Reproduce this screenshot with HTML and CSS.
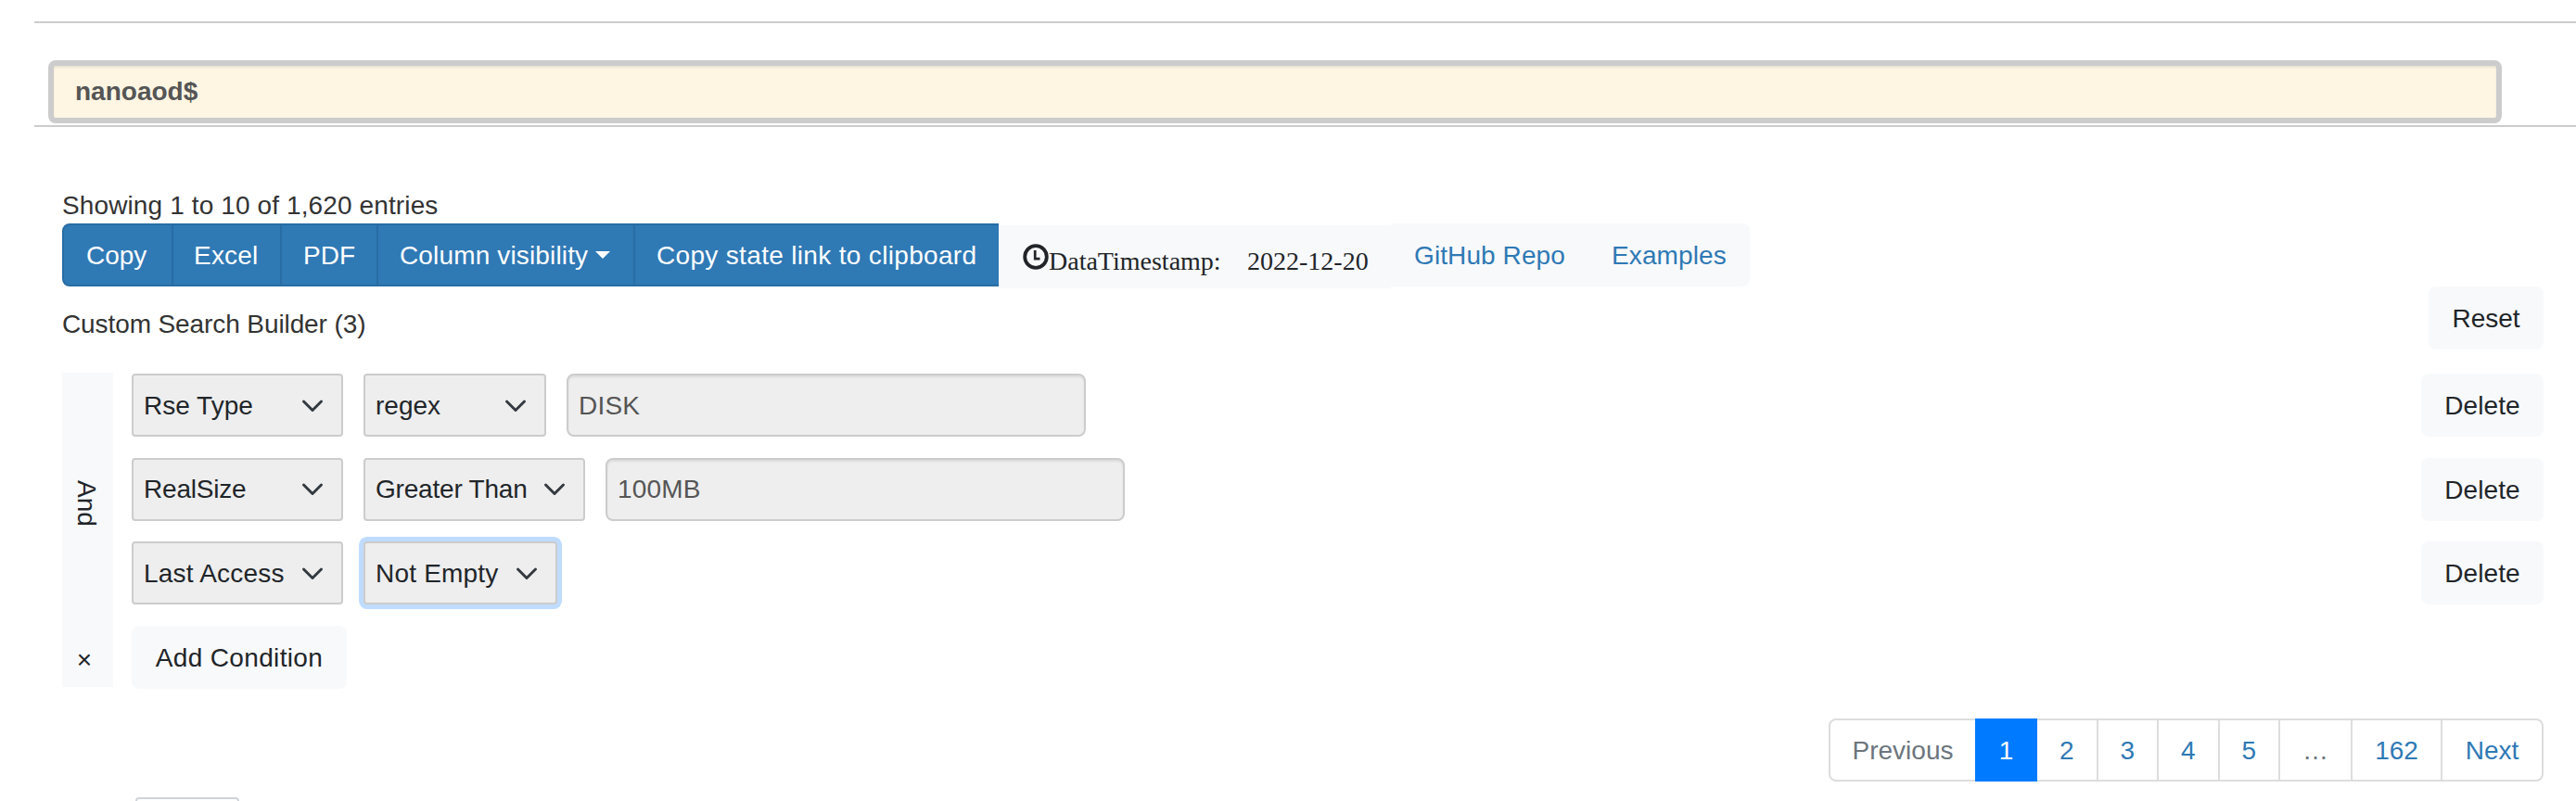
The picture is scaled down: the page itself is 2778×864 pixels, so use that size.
FILE: index.html
```html
<!DOCTYPE html>
<html lang="en">
<head>
<meta charset="utf-8">
<title>Datasets</title>
<link rel="stylesheet" href="styles.css">
</head>
<body>
<header class="query"><input class="query-input" value="nanoaod$" aria-label="Dataset"></header>
<main class="content">
  <div class="info">Showing 1 to 10 of 1,620 entries</div>
  <div class="toolbar">
    <button class="tool tool-copy">Copy</button>
    <button class="tool tool-excel">Excel</button>
    <button class="tool tool-pdf">PDF</button>
    <button class="tool tool-columns">Column visibility<span class="caret"></span></button>
    <button class="tool tool-link">Copy state link to clipboard</button>
    <div class="stamp">
      <svg class="clock" viewBox="0 0 28 28"><circle cx="14" cy="14" r="11.8"/><path d="M13.2 7v9.2h5.3"/></svg>
      <span class="stamp-label">DataTimestamp:</span><span class="stamp-date">2022-12-20</span>
    </div>
    <div class="links"><a class="repo">GitHub Repo</a><a class="examples">Examples</a></div>
  </div>
  <div class="builder-head"><div class="builder-title">Custom Search Builder (3)</div><button class="light reset">Reset</button></div>
  <div class="builder">
    <div class="logic"><span class="logic-and">And</span><span class="logic-clear">×</span></div>
    <div class="criteria">
      <div class="row">
        <div class="select field">Rse Type<svg class="chevron" viewBox="0 0 24 16"><path d="M2.5 3l9.5 9.5L21.500 3"/></svg></div>
        <div class="select cond-regex">regex<svg class="chevron" viewBox="0 0 24 16"><path d="M2.500 3l9.500 9.500L21.500 3"/></svg></div>
        <input class="value" value="DISK" aria-label="Value">
        <button class="light delete">Delete</button>
      </div>
      <div class="row">
        <div class="select field tight">RealSize<svg class="chevron" viewBox="0 0 24 16"><path d="M2.500 3l9.500 9.500L21.500 3"/></svg></div>
        <div class="select cond-greater tight">Greater Than<svg class="chevron" viewBox="0 0 24 16"><path d="M2.500 3l9.500 9.500L21.500 3"/></svg></div>
        <input class="value" value="100MB" aria-label="Value">
        <button class="light delete">Delete</button>
      </div>
      <div class="row">
        <div class="select field wide">Last Access<svg class="chevron" viewBox="0 0 24 16"><path d="M2.500 3l9.500 9.500L21.500 3"/></svg></div>
        <div class="select cond-empty focused wide">Not Empty<svg class="chevron" viewBox="0 0 24 16"><path d="M2.500 3l9.500 9.500L21.500 3"/></svg></div>
        <button class="light delete">Delete</button>
      </div>
      <div class="row"><button class="light add">Add Condition</button></div>
    </div>
  </div>
  <nav class="pages">
    <a class="page previous">Previous</a><a class="page active">1</a><a class="page">2</a><a class="page">3</a><a class="page">4</a><a class="page">5</a><a class="page dots">…</a><a class="page last">162</a><a class="page next">Next</a>
  </nav>
  <div class="length"></div>
</main>
</body>
</html>
```

FILE: styles.css
```css
* { box-sizing: border-box; }
html, body { height: 864px; overflow: hidden; }
body { margin: 0; background: #fff; color: #333; font: 28px/40px "Liberation Sans", Arial, sans-serif; }
button, input { font: inherit; margin: 0; }
svg { fill: none; flex: none; }
.query { margin: 23px 0 0 37px; height: 114px; border-top: 2px solid #ccc; border-bottom: 2px solid #ccc; padding: 40px 0 0 15px; }
.query-input { display: block; width: 2646px; height: 68px; border: 6px solid #ccc; border-radius: 8px; background: #fff5e3; color: #555; font-weight: 700; padding: 0 23px; box-shadow: inset 0 2px 2px rgba(0,0,0,.075); outline: 0; }
.content { padding: 65px 35px 0 67px; }
.info { height: 39px; letter-spacing: .12px; }
.toolbar { display: flex; height: 68px; align-items: flex-start; }
.tool { height: 68px; border: 2px solid #286da4; border-left-width: 0; background: #2f79b5; color: #fff; text-align: left; padding: 2px 0 0 26px; white-space: nowrap; }
.tool-copy { width: 120px; border-left-width: 2px; border-radius: 8px 0 0 8px; padding-left: 24px; }
.tool-excel { width: 117px; padding-left: 22px; letter-spacing: .2px; }
.tool-pdf { width: 104px; padding-left: 23px; }
.tool-columns { width: 277px; padding-left: 23px; letter-spacing: .15px; }
.tool-link { width: 392px; padding-left: 23px; border-right-width: 0; letter-spacing: .33px; }
.caret { display: inline-block; border: 8px solid transparent; border-top-color: #fff; border-bottom: 0; margin-left: 8px; vertical-align: 6px; }
.stamp { width: 423px; height: 68px; margin-top: 2px; background: #f8f9fb; color: #212529; display: flex; align-items: flex-start; padding: 19px 0 0 26px; font-family: "Liberation Serif", serif; }
.clock { width: 28px; height: 28px; stroke: #212529; stroke-width: 3.8; margin-top: 1px; }
.clock path { stroke-width: 2.7; }
.stamp-label { width: 214px; white-space: nowrap; }
.links { width: 387px; height: 68px; background: #f8f9fb; border-radius: 0 8px 8px 0; color: #2f79b5; display: flex; padding: 15px 0 0 25px; letter-spacing: .1px; }
.repo { width: 213px; }
.light { height: 68px; border: 0; border-radius: 8px; background: #f8f9fb; color: #212529; padding: 2px 0 0; white-space: nowrap; }
.builder-head { display: flex; justify-content: space-between; height: 93px; }
.builder-title { padding-top: 21px; letter-spacing: -.1px; }
.reset { width: 124px; }
.builder { display: flex; gap: 20px; height: 341px; }
.logic { width: 55px; height: 339px; background: #f8f9fb; color: #212529; display: flex; flex-direction: column; align-items: center; justify-content: space-between; padding: 116px 0 9px; }
.logic-and { writing-mode: vertical-rl; line-height: 43px; margin-right: 3px; }
.logic-clear { margin-right: 7px; font-size: 28px; }
.criteria { flex: 1; display: flex; flex-direction: column; gap: 22.7px; padding-top: 1px; }
.row { display: flex; gap: 22px; height: 68px; }
.select { height: 68px; border: 2px solid #ccc; border-radius: 4px; background: #eee; color: #212529; display: flex; align-items: center; justify-content: space-between; padding: 1px 19px 0 11px; white-space: nowrap; }
.tight { letter-spacing: -.2px; }
.wide { letter-spacing: .2px; }
.field { width: 228px; }
.cond-regex { width: 197px; }
.cond-greater { width: 239px; }
.cond-empty { width: 209px; }
.focused { box-shadow: 0 0 0 5px #bfdcff; }
.chevron { width: 24px; height: 16px; stroke: #343a40; stroke-width: 3; stroke-linecap: round; stroke-linejoin: round; }
.value { width: 560px; height: 68px; border: 2px solid #ccc; border-radius: 8px; background: #eee; color: #555; padding: 1px 12px 0 11px; box-shadow: inset 0 2px 2px rgba(0,0,0,.075); outline: 0; letter-spacing: .2px; }
.delete { width: 132px; margin-left: auto; letter-spacing: .1px; }
.add { width: 232px; letter-spacing: .35px; }
.pages { display: flex; height: 68px; width: 771px; margin: 32px 0 0 auto; border: 2px solid #ddd; border-radius: 8px; line-height: 64px; text-align: center; color: #2f79b5; }
.page { width: 65.5px; border-right: 2px solid #ddd; padding-top: 1px; }
.page.previous { width: 156px; border-right: 0; color: #6c757d; }
.page.active { width: 67px; height: 68px; margin-top: -2px; padding-top: 3px; border-right: 0; background: #007bff; color: #fff; }
.page.dots { width: 78px; color: #6c757d; }
.page.last { width: 97px; }
.page.next { flex: 1; border-right: 0; }
.length { width: 112px; height: 4px; margin: 17px 0 0 79px; border: 2px solid #ced4da; border-bottom: 0; border-radius: 8px 8px 0 0; }
```
